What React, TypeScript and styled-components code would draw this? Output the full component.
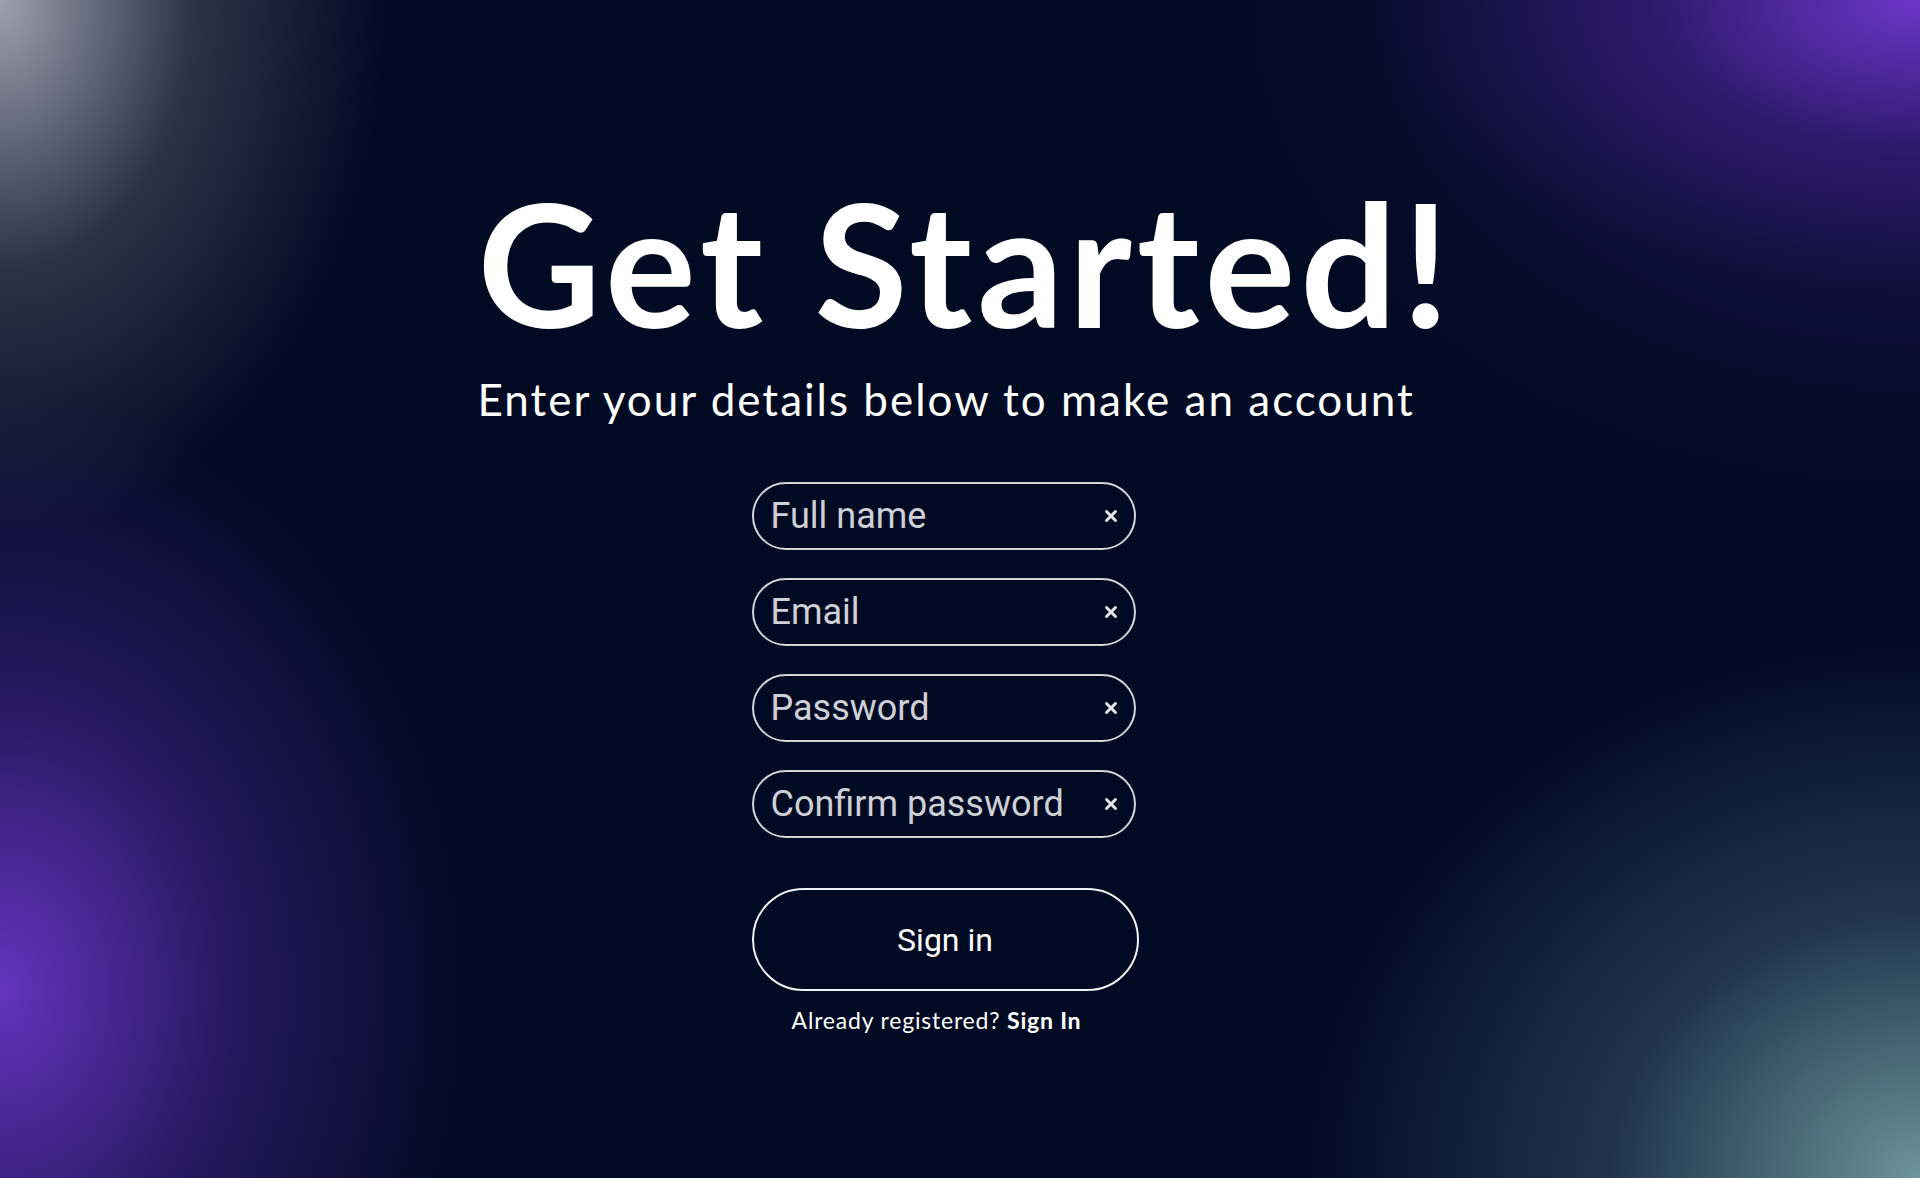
import React from 'react';
import styled, { createGlobalStyle } from 'styled-components';

const GlobalStyle = createGlobalStyle`
    * {
        box-sizing: border-box;
    }
    html, body {
        margin: 0;
        padding: 0;
        background-color: #010a23;
    }
`;

const fields = ['Full name', 'Email', 'Password', 'Confirm password'];

const ClearIcon = () => (
    <svg width="14" height="14" viewBox="0 0 14 14">
        <path d="M2.5 2.5 L11.5 11.5 M11.5 2.5 L2.5 11.5" stroke="#e4e4e8" strokeWidth="3" strokeLinecap="round" />
    </svg>
);

export default function App() {
    return (
        <Page>
            <GlobalStyle />
            <Hero>
                <Heading>Get Started!</Heading>
                <Subtitle>Enter your details below to make an account</Subtitle>
            </Hero>
            <Form onSubmit={(e) => e.preventDefault()}>
                {fields.map((f) => (
                    <Field key={f}>
                        <Input type={f.toLowerCase().includes('password') ? 'password' : 'text'} placeholder={f} />
                        <ClearButton type="button">
                            <ClearIcon />
                        </ClearButton>
                    </Field>
                ))}
                <SubmitButton type="submit">Sign in</SubmitButton>
                <Footer>
                    Already registered? <FooterLink href="#">Sign In</FooterLink>
                </Footer>
            </Form>
        </Page>
    );
}

const Page = styled.div`
    min-height: 1178px;
    display: flex;
    flex-direction: column;
    align-items: center;
    padding-top: 177px;
    background-color: #010a23;
    background-image:
        radial-gradient(ellipse 390px 540px at 0 0, rgba(178, 182, 192, 0.88), rgba(120, 126, 140, 0.35) 50%, rgba(1, 10, 35, 0) 100%),
        radial-gradient(ellipse 540px 300px at 100% 0, rgba(112, 56, 206, 0.95), rgba(70, 36, 150, 0.5) 50%, rgba(1, 10, 35, 0) 100%),
        radial-gradient(ellipse 720px 520px at 100% 0, rgba(50, 26, 110, 0.55), rgba(1, 10, 35, 0) 100%),
        radial-gradient(ellipse 470px 600px at 0 84%, rgba(100, 52, 190, 1), rgba(66, 36, 140, 0.55) 50%, rgba(1, 10, 35, 0) 100%),
        radial-gradient(ellipse 620px 540px at 100% 100%, rgba(108, 148, 156, 1), rgba(62, 94, 114, 0.5) 50%, rgba(1, 10, 35, 0) 100%);
`;

const Hero = styled.div`
    display: flex;
    flex-direction: column;
    align-items: flex-start;
    margin-left: 12px;
    color: #ffffff;
    font-family: Lato, "Noto Sans", sans-serif;
`;

const Heading = styled.h1`
    margin: 0;
    font-size: 170px;
    font-weight: 700;
    line-height: 1;
    letter-spacing: 5px;
`;

const Subtitle = styled.p`
    margin: 30px 0 0 0;
    font-size: 44px;
    font-weight: 400;
    line-height: 1;
    letter-spacing: 2px;
`;

const Form = styled.form`
    display: flex;
    flex-direction: column;
    align-items: center;
    width: 387px;
    margin-top: 61px;
    margin-right: 30px;
`;

const Field = styled.div`
    position: relative;
    width: 384px;
    height: 68px;
    margin-bottom: 28px;
    align-self: flex-start;
`;

const Input = styled.input`
    width: 100%;
    height: 100%;
    border: 2px solid #d2d3d8;
    border-radius: 34px;
    background: transparent;
    padding: 0 50px 0 17px;
    color: #d2d3d8;
    font-family: Roboto, sans-serif;
    font-size: 36px;
    outline: none;

    &::placeholder {
        color: #cfd0d6;
        opacity: 1;
    }
`;

const ClearButton = styled.button`
    position: absolute;
    right: 18px;
    top: 50%;
    transform: translateY(-50%);
    display: flex;
    align-items: center;
    justify-content: center;
    width: 14px;
    height: 14px;
    padding: 0;
    border: none;
    background: transparent;
    cursor: pointer;
`;

const SubmitButton = styled.button`
    width: 387px;
    height: 103px;
    margin-top: 22px;
    border: 2px solid #f2f2f4;
    border-radius: 52px;
    background: transparent;
    color: #ffffff;
    font-family: Roboto, sans-serif;
    font-size: 32px;
    font-weight: 400;
    cursor: pointer;
`;

const Footer = styled.p`
    margin: 18px 17px 0 0;
    color: #ffffff;
    font-family: Lato, "Noto Sans", sans-serif;
    font-size: 23px;
    line-height: 1;
    letter-spacing: 0.8px;
`;

const FooterLink = styled.a`
    color: #ffffff;
    font-weight: 700;
    text-decoration: none;
`;
